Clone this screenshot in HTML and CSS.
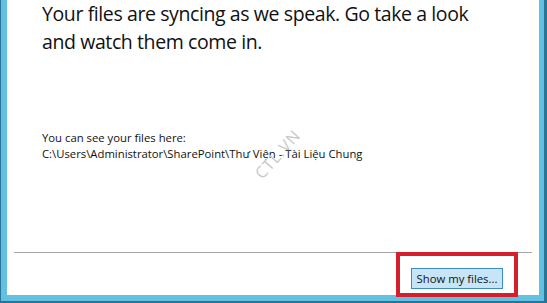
FILE: index.html
```html
<!DOCTYPE html>
<html>
<head>
<meta charset="utf-8">
<link rel="stylesheet" href="styles.css">
</head>
<body>
<div class="window">
  <div class="pane">
    <p class="headline">Your files are syncing as we speak. Go take a look<br>and watch them come in.</p>
    <div class="location">
      <div>You can see your files here:</div>
      <div>C:\Users\Administrator\SharePoint\Thư Viện - Tài Liệu Chung</div>
    </div>
    <div class="spacer"></div>
    <div class="sep"></div>
    <div class="actions"><button class="btn">Show my files...</button></div>
  </div>
</div>
<div class="highlight"></div>
<span class="watermark">CTL.VN</span>
</body>
</html>
```

FILE: styles.css
```css
html, body {
  margin: 0;
  padding: 0;
  background: #fff;
}
body {
  width: 547px;
  height: 303px;
  overflow: hidden;
  position: relative;
  font-family: "Open Sans", "Noto Sans", sans-serif;
  color: #1a1a1a;
}
.window {
  box-sizing: border-box;
  width: 547px;
  height: 303px;
  background: #62c0e2;
  border-left: 1px solid #2a7596;
  border-right: 3px solid #2a7596;
  border-bottom: 2px solid #2a7596;
  padding: 0 5px 6px 6px;
}
.pane {
  box-sizing: border-box;
  height: 100%;
  background: #fff;
  display: flex;
  flex-direction: column;
}
.headline {
  margin: 0 0 0 35px;
  font-size: 19.5px;
  letter-spacing: -0.4px;
  line-height: 28px;
  color: #111;
}
.location {
  margin: 74px 0 0 35px;
  font-size: 11.3px;
  line-height: 16px;
  color: #111;
}
.spacer {
  flex: 1;
}
.sep {
  height: 1px;
  background: #a6a6a6;
  margin: 0 7px 0 7px;
}
.actions {
  display: flex;
  justify-content: flex-end;
  padding: 15px 36px 0 0;
  height: 27px;
}
.btn {
  box-sizing: border-box;
  width: 92px;
  height: 21px;
  padding: 0;
  background: #c7e5f7;
  border: 1px solid #3c8bc4;
  border-radius: 0;
  font-family: "Open Sans", "Noto Sans", sans-serif;
  font-size: 11.3px;
  color: #111;
}
.highlight {
  position: absolute;
  left: 396px;
  top: 252px;
  width: 122px;
  height: 45px;
  box-sizing: border-box;
  border: 4px solid #d4202c;
}
.watermark {
  position: absolute;
  left: 248px;
  top: 143px;
  font-family: "Open Sans", sans-serif;
  font-size: 16px;
  color: #c8c8c8;
  transform: rotate(-48deg);
  letter-spacing: 1px;
}
```
